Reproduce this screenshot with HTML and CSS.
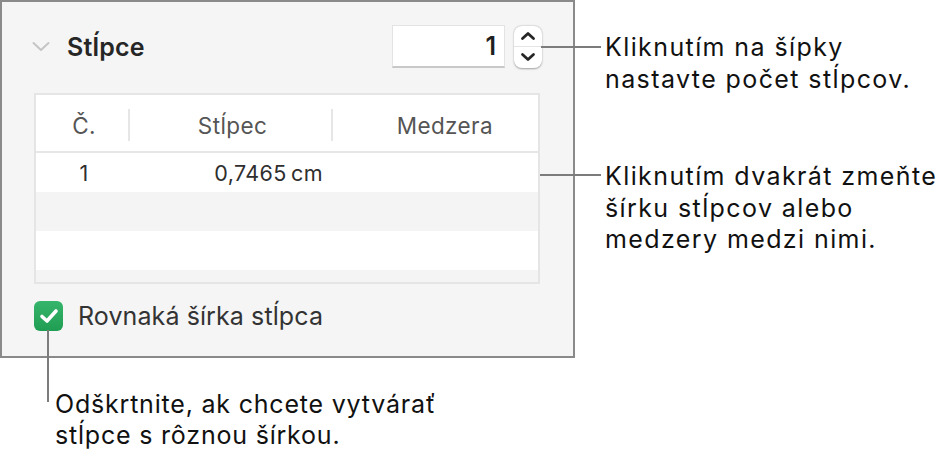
FILE: index.html
```html
<!DOCTYPE html>
<html lang="sk">
<head>
    <meta charset="UTF-8">
    <meta name="viewport" content="width=device-width, initial-scale=1.0">
    <title>Stĺpce</title>
    <link rel="stylesheet" href="styles.css">
</head>
<body>

    <div class="figure">
        <div class="panel">
            <div class="panel-head">
                <svg class="disclosure" width="18" height="11" viewBox="0 0 18 11">
                    <path d="M1.5 2 L9 9 L16.5 2" fill="none" stroke="#c5c5c5" stroke-width="2" stroke-linecap="round" stroke-linejoin="round"/>
                </svg>
                <h2 class="title">Stĺpce</h2>
                <div class="count">1</div>
                <div class="stepper">
                    <span class="step">
                        <svg width="16" height="10" viewBox="0 0 16 10"><path d="M2.5 7.5 L8 2.5 L13.5 7.5" fill="none" stroke="#262626" stroke-width="2.8" stroke-linecap="round" stroke-linejoin="round"/></svg>
                    </span>
                    <span class="step step-down">
                        <svg width="16" height="10" viewBox="0 0 16 10"><path d="M2.5 2.5 L8 7.5 L13.5 2.5" fill="none" stroke="#262626" stroke-width="2.8" stroke-linecap="round" stroke-linejoin="round"/></svg>
                    </span>
                </div>
            </div>

            <div class="col-table">
                <div class="thead">
                    <span class="th th-num">Č.</span>
                    <span class="sep"></span>
                    <span class="th th-col">Stĺpec</span>
                    <span class="sep"></span>
                    <span class="th th-gap">Medzera</span>
                </div>
                <div class="row">
                    <span class="td-num">1</span>
                    <span class="td-col">0,7465&thinsp;cm</span>
                    <span></span>
                </div>
                <div class="row alt"></div>
                <div class="row"></div>
                <div class="row alt last"></div>
            </div>

            <label class="check">
                <span class="box">
                    <svg width="20" height="16" viewBox="0 0 20 16"><path d="M3 8.5 L8 13 L17 3" fill="none" stroke="#fff" stroke-width="3.6" stroke-linecap="round" stroke-linejoin="round"/></svg>
                </span>
                Rovnaká šírka stĺpca
            </label>
        </div>

        <div class="notes">
            <p class="note note-steps">Kliknutím na šípky<br>nastavte počet stĺpcov.</p>
            <p class="note note-table">Kliknutím dvakrát zmeňte<br>šírku stĺpcov alebo<br>medzery medzi nimi.</p>
        </div>

        <p class="note note-check">Odškrtnite, ak chcete vytvárať<br>stĺpce s rôznou šírkou.</p>

        <span class="leader leader-steps"></span>
        <span class="leader leader-table"></span>
        <span class="leader leader-check"></span>
    </div>

</body>
</html>
```

FILE: styles.css
```css
body {
    margin: 0;
    background: #fff;
    font-family: Inter, "Noto Sans", sans-serif;
    color: #1a1a1a;
}

.figure {
    position: relative;
    display: grid;
    grid-template-columns: 575px 1fr;
    width: 950px;
    height: 463px;
}

.panel {
    box-sizing: border-box;
    height: 358px;
    padding: 0 32px 0 32px;
    background: #f5f5f5;
    border: 2px solid #8a8a8a;
}

.panel-head {
    display: flex;
    align-items: center;
    height: 43px;
    padding-top: 23px;
    margin-bottom: 25px;
}

.disclosure {
    margin-left: -2px;
    margin-right: 17px;
}

.title {
    margin: 0;
    font-size: 25px;
    line-height: 30px;
    font-weight: 600;
    letter-spacing: 0.2px;
    color: #262626;
}

.count {
    box-sizing: border-box;
    width: 113px;
    height: 43px;
    margin-left: auto;
    padding-right: 8px;
    background: #fff;
    border: 1px solid #e3e3e3;
    border-bottom: 2px solid #c8c8c8;
    text-align: right;
    font-size: 25px;
    font-weight: 600;
    line-height: 40px;
    color: #1f1f1f;
}

.stepper {
    display: flex;
    flex-direction: column;
    width: 28px;
    height: 42px;
    margin-left: 9px;
    margin-right: -1px;
    background: #fff;
    border-radius: 8px;
    box-shadow: 0 0.5px 2px rgba(0, 0, 0, 0.35);
}

.step {
    flex: 1;
    display: flex;
    align-items: center;
    justify-content: center;
}

.step-down {
    border-top: 1px solid #e4e4e4;
}

.col-table {
    box-sizing: border-box;
    width: 506px;
    background: #fff;
    border: 2px solid #e5e5e5;
}

.thead {
    display: flex;
    align-items: center;
    box-sizing: border-box;
    height: 58px;
    padding-top: 4px;
    border-bottom: 2px solid #e6e6e6;
    font-size: 22.5px;
    letter-spacing: 0.4px;
    color: #555;
}

.th-num {
    width: 92px;
    padding-left: 4px;
    box-sizing: border-box;
    text-align: center;
}

.th-col {
    width: 201px;
    padding-left: 4px;
    box-sizing: border-box;
    text-align: center;
}

.th-gap {
    flex: 1;
    text-align: right;
    padding-right: 45px;
}

.sep {
    width: 2px;
    height: 32px;
    background: #e6e6e6;
}

.row {
    display: grid;
    grid-template-columns: 96px 201px 1fr;
    height: 39px;
    font-size: 21.5px;
    letter-spacing: 0.4px;
    line-height: 41px;
    color: #2e2e2e;
}

.row.alt {
    background: #f4f4f4;
}

.row.last {
    height: 12px;
}

.td-num {
    text-align: center;
}

.td-col {
    text-align: right;
    padding-right: 10px;
}

.check {
    display: flex;
    align-items: center;
    margin-top: 17px;
    font-size: 25px;
    letter-spacing: 0.1px;
    color: #333;
}

.box {
    display: flex;
    align-items: center;
    justify-content: center;
    width: 29px;
    height: 30px;
    margin-right: 15px;
    border-radius: 6px;
    background: linear-gradient(#35b56b, #1f9d53);
}

.notes {
    padding-left: 30px;
    padding-top: 32px;
}

.note {
    margin: 0;
    font-size: 25px;
    letter-spacing: 0.8px;
    line-height: 31.5px;
    color: #111;
}

.notes .note {
    letter-spacing: 1.4px;
}

.note-table {
    margin-top: 66px;
}

.note-check {
    grid-column: 1 / 3;
    padding-left: 55px;
    padding-top: 19px;
}

.leader {
    position: absolute;
    background: #7c7c7c;
}

.leader-steps {
    left: 541px;
    top: 46px;
    width: 60px;
    height: 2px;
}

.leader-table {
    left: 540px;
    top: 174px;
    width: 61px;
    height: 2px;
}

.leader-check {
    left: 47px;
    top: 330px;
    width: 2px;
    height: 72px;
}
```
